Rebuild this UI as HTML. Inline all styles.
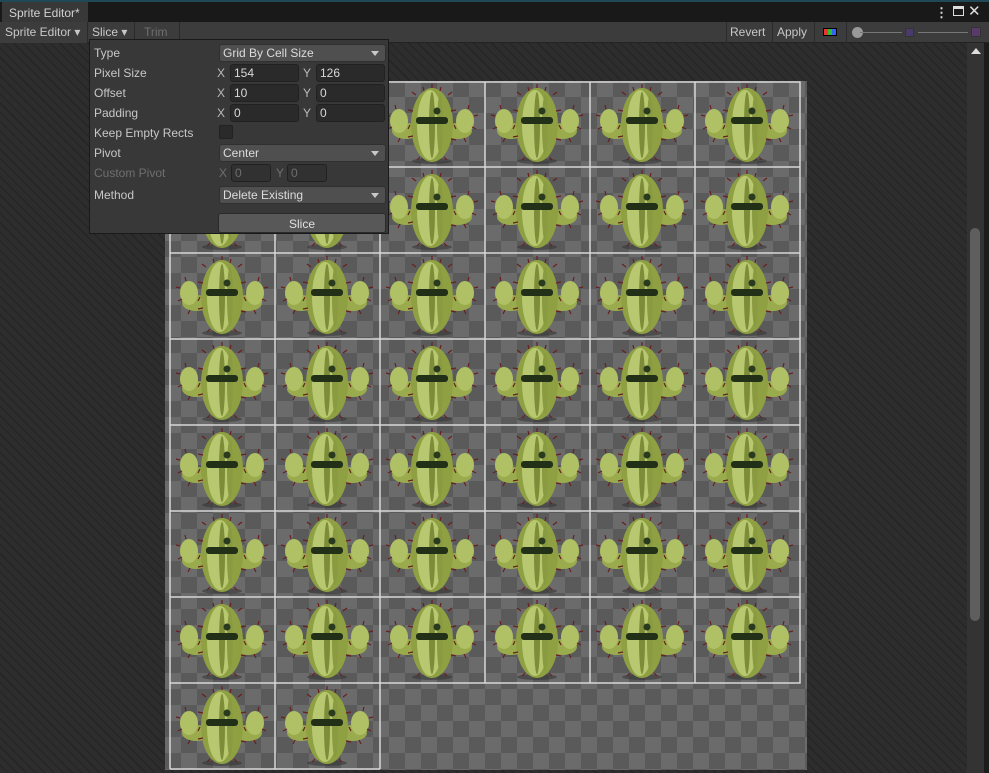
<!DOCTYPE html>
<html><head><meta charset="utf-8"><style>
*{margin:0;padding:0;box-sizing:border-box}
body{width:989px;height:773px;overflow:hidden;background:#2c2c2c;font-family:"Liberation Sans",sans-serif;font-size:12px;color:#c8c8c8;position:relative}
.abs{position:absolute}
#bg{left:0;top:43px;width:968px;height:730px;background:repeating-linear-gradient(45deg,#2d2d2d 0 5px,#262626 5px 6.5px)}
#title{left:0;top:0;width:989px;height:22px;background:#191919;border-top:2px solid #1f4a55}
#tab{left:2px;top:2px;width:86px;height:21px;background:#383838;padding:4px 0 0 7px;color:#d2d2d2}
#tool{left:0;top:22px;width:989px;height:21px;background:#3c3c3c;border-bottom:1px solid #232323}
.tb{position:absolute;top:0;height:21px;padding-top:3px;border-right:1px solid #2a2a2a}
#tex{left:165px;top:81px;width:642px;height:689px;background-color:#5a5a5a;background-image:linear-gradient(45deg,#6b6b6b 25%,transparent 25%,transparent 75%,#6b6b6b 75%),linear-gradient(45deg,#6b6b6b 25%,transparent 25%,transparent 75%,#6b6b6b 75%);background-size:32px 32px;background-position:0 0,16px 16px}
#panel{left:89px;top:39px;width:300px;height:195px;background:#383838;border:1px solid #1a1a1a}
.lb{position:absolute;left:4px;font-size:12px}
.dd{position:absolute;left:129px;width:167px;height:18px;background:#4f4f4f;border:1px solid #303030;border-radius:3px;padding:1px 0 0 3px;color:#dcdcdc}
.dd:after{content:"";position:absolute;right:6px;top:6px;border:4px solid transparent;border-top:5px solid #c8c8c8}
.fx{position:absolute;width:69px;height:18px;background:#2a2a2a;border:1px solid #212121;border-radius:3px;padding:1px 0 0 3px;color:#d8d8d8}
.xl{position:absolute;color:#bbb}
#sb{left:967px;top:43px;width:17px;height:730px;background:#333}
#thumb{left:970px;top:228px;width:10px;height:393px;background:#5e5e5e;border-radius:5px}
</style></head><body>
<div id="bg" class="abs"></div>
<div id="title" class="abs"></div>
<div id="tab" class="abs">Sprite Editor*</div>
<div class="abs" style="left:935px;top:5px;color:#ddd;font-size:13px;font-weight:bold">⋮</div>
<div class="abs" style="left:953px;top:6px;width:11px;height:10px;border:1.5px solid #ddd;border-top-width:3px"></div>
<div class="abs" style="left:968px;top:2px;color:#ddd;font-size:15px">✕</div>
<div id="tool" class="abs">
 <div class="tb" style="left:0;width:88px;padding-left:5px;background:#3c3c3c">Sprite Editor ▾</div>
 <div class="tb" style="left:88px;width:47px;padding-left:4px">Slice ▾</div>
 <div class="tb" style="left:135px;width:45px;padding-left:9px;color:#6e6e6e">Trim</div>
 <div class="tb" style="left:726px;width:47px;padding-left:3px;border-left:1px solid #2a2a2a">Revert</div>
 <div class="tb" style="left:773px;width:42px;padding-left:4px">Apply</div>
 <div class="tb" style="left:815px;width:32px"><div style="position:absolute;left:8px;top:6px;width:14px;height:8px;border:1px solid #000;background:linear-gradient(90deg,#e33 33%,#3b3 33% 66%,#36e 66%)"></div></div>
 <div class="abs" style="left:852px;top:5px;width:11px;height:11px;border-radius:50%;background:#999"></div>
 <div class="abs" style="left:860px;top:10px;width:42px;height:1px;background:#777"></div>
 <div class="abs" style="left:905px;top:6px;width:9px;height:9px;background:#4a3a6a;border:1px solid #333"></div>
 <div class="abs" style="left:918px;top:10px;width:50px;height:1px;background:#777"></div>
 <div class="abs" style="left:971px;top:5px;width:10px;height:10px;background:#5a3a6a;border:1px solid #333"></div>
</div>
<div id="sb" class="abs"></div>
<div class="abs" style="left:971px;top:48px;border:5px solid transparent;border-bottom:6px solid #ddd;border-top:0"></div>
<div id="thumb" class="abs"></div>
<div class="abs" style="left:984px;top:43px;width:5px;height:730px;background:#1c1c1c"></div>

<svg width="0" height="0" style="position:absolute"><defs>
<g id="c">
<ellipse cx="52" cy="80" rx="20" ry="3" fill="#2e2e2e" opacity=".5"/>
<ellipse cx="26" cy="50" rx="14" ry="8" fill="#9aab4e"/>
<ellipse cx="19" cy="40" rx="9" ry="12" fill="#b0c064"/>
<ellipse cx="78" cy="50" rx="14" ry="8" fill="#9aab4e"/>
<ellipse cx="85" cy="40" rx="9" ry="12" fill="#b0c064"/>
<ellipse cx="52" cy="44" rx="21" ry="37" fill="#8fa043"/>
<ellipse cx="50" cy="44" rx="13" ry="35" fill="#b8c870"/>
<ellipse cx="52" cy="44" rx="3" ry="33" fill="#7c8c38"/>
<ellipse cx="60" cy="44" rx="3" ry="30" fill="#8a9a40"/>
<rect x="36" y="36" width="32" height="7" rx="3" fill="#223018"/>
<circle cx="57" cy="30" r="3.5" fill="#2a3a1e"/>
<g stroke="#6b1e1e" stroke-width="1.2">
<path d="M36 14l-4-3M68 14l4-3M33 30l-5-1M71 30l5-1M33 55l-5 1M71 58l5 1M40 76l-3 3M64 76l3 3M10 35l-4-1M94 35l4-1M16 28l-1-4M88 28l1-4M20 57l-2 4M84 57l2 4M52 7v-4M44 10l-1-4M60 10l1-4M12 46l-4 2M92 46l4 2M30 44l-2 4M74 44l2 4"/>
</g>
</g></defs></svg>

<div id="tex" class="abs"></div>
<div class="abs" style="left:165px;top:81px;width:642px;height:689px">
<svg width="642" height="689">
<g>
<use href="#c" x="5" y="0"/><use href="#c" x="110" y="0"/><use href="#c" x="215" y="0"/><use href="#c" x="320" y="0"/><use href="#c" x="425" y="0"/><use href="#c" x="530" y="0"/>
<use href="#c" x="5" y="86"/><use href="#c" x="110" y="86"/><use href="#c" x="215" y="86"/><use href="#c" x="320" y="86"/><use href="#c" x="425" y="86"/><use href="#c" x="530" y="86"/>
<use href="#c" x="5" y="172"/><use href="#c" x="110" y="172"/><use href="#c" x="215" y="172"/><use href="#c" x="320" y="172"/><use href="#c" x="425" y="172"/><use href="#c" x="530" y="172"/>
<use href="#c" x="5" y="258"/><use href="#c" x="110" y="258"/><use href="#c" x="215" y="258"/><use href="#c" x="320" y="258"/><use href="#c" x="425" y="258"/><use href="#c" x="530" y="258"/>
<use href="#c" x="5" y="344"/><use href="#c" x="110" y="344"/><use href="#c" x="215" y="344"/><use href="#c" x="320" y="344"/><use href="#c" x="425" y="344"/><use href="#c" x="530" y="344"/>
<use href="#c" x="5" y="430"/><use href="#c" x="110" y="430"/><use href="#c" x="215" y="430"/><use href="#c" x="320" y="430"/><use href="#c" x="425" y="430"/><use href="#c" x="530" y="430"/>
<use href="#c" x="5" y="516"/><use href="#c" x="110" y="516"/><use href="#c" x="215" y="516"/><use href="#c" x="320" y="516"/><use href="#c" x="425" y="516"/><use href="#c" x="530" y="516"/>
<use href="#c" x="5" y="602"/><use href="#c" x="110" y="602"/>
</g>
<g fill="none" stroke="#d8d8d8" stroke-width="1.5">
<rect x="5" y="1" width="630" height="601"/>
<path d="M110 1V688M215 1V602M320 1V602M425 1V602M530 1V602M5 86H635M5 172H635M5 258H635M5 344H635M5 430H635M5 516H635M5 688H215M5 602V688M215 602V688"/>
</g>
</svg>
</div>

<div id="panel" class="abs">
 <div class="lb" style="top:6px">Type</div>
 <div class="dd" style="top:4px">Grid By Cell Size</div>
 <div class="lb" style="top:26px">Pixel Size</div>
 <div class="xl" style="left:127px;top:26px">X</div><div class="fx" style="left:140px;top:24px">154</div>
 <div class="xl" style="left:213px;top:26px">Y</div><div class="fx" style="left:226px;top:24px">126</div>
 <div class="lb" style="top:46px">Offset</div>
 <div class="xl" style="left:127px;top:46px">X</div><div class="fx" style="left:140px;top:44px">10</div>
 <div class="xl" style="left:213px;top:46px">Y</div><div class="fx" style="left:226px;top:44px">0</div>
 <div class="lb" style="top:66px">Padding</div>
 <div class="xl" style="left:127px;top:66px">X</div><div class="fx" style="left:140px;top:64px">0</div>
 <div class="xl" style="left:213px;top:66px">Y</div><div class="fx" style="left:226px;top:64px">0</div>
 <div class="lb" style="top:86px">Keep Empty Rects</div>
 <div class="abs" style="left:129px;top:85px;width:14px;height:14px;background:#2a2a2a;border:1px solid #222;border-radius:2px"></div>
 <div class="lb" style="top:106px">Pivot</div>
 <div class="dd" style="top:104px">Center</div>
 <div class="lb" style="top:126px;color:#6f6f6f">Custom Pivot</div>
 <div class="xl" style="left:129px;top:126px;color:#6f6f6f">X</div><div class="fx" style="left:141px;top:124px;width:40px;background:#313131;color:#6f6f6f">0</div>
 <div class="xl" style="left:186px;top:126px;color:#6f6f6f">Y</div><div class="fx" style="left:197px;top:124px;width:40px;background:#313131;color:#6f6f6f">0</div>
 <div class="lb" style="top:148px">Method</div>
 <div class="dd" style="top:146px">Delete Existing</div>
 <div class="abs" style="left:128px;top:173px;width:168px;height:20px;background:#585858;border:1px solid #2a2a2a;border-radius:3px;text-align:center;padding-top:3px;color:#e0e0e0">Slice</div>
</div>
</body></html>
